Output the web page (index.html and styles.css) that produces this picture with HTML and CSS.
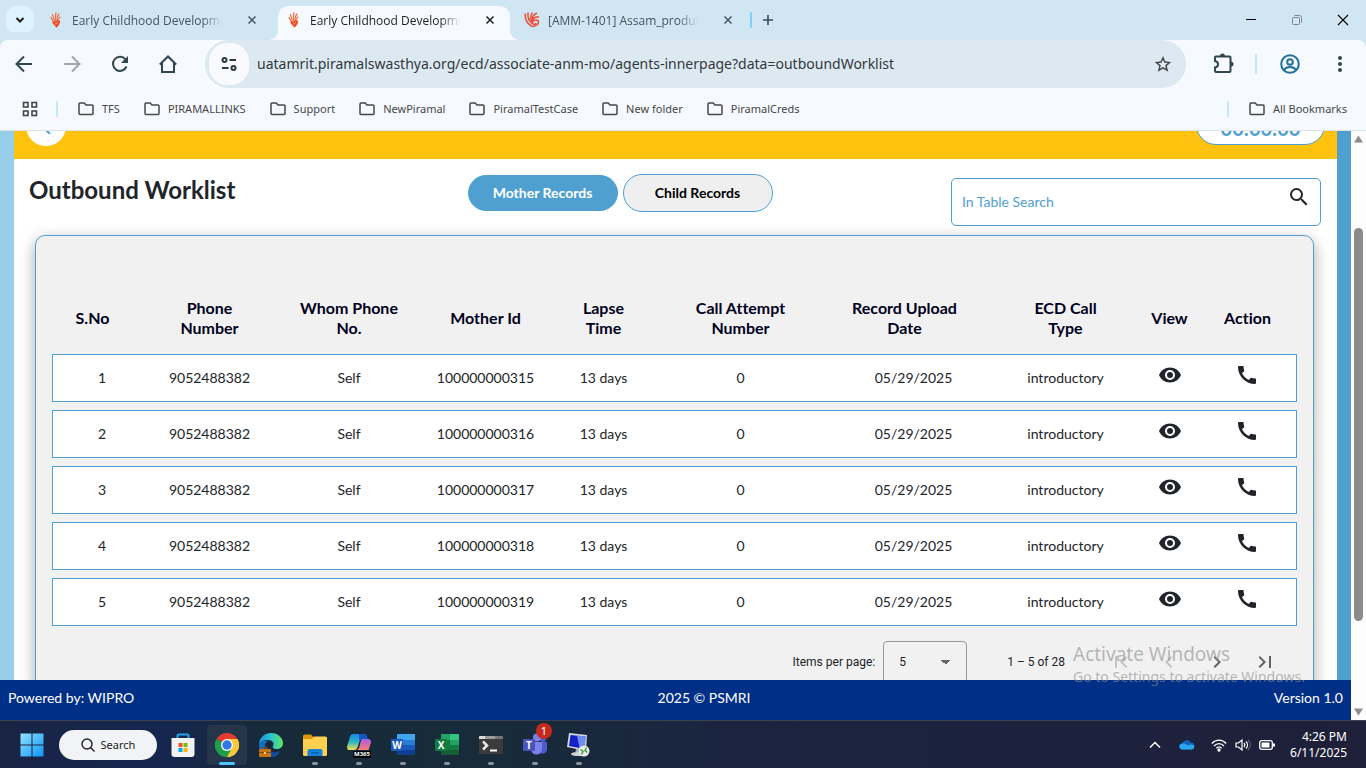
FILE: index.html
```html
<!DOCTYPE html>
<html lang="en">
<head>
  <meta charset="UTF-8" />
  <meta name="viewport" content="width=device-width, initial-scale=1.0" />
  <title>Early Childhood Development</title>
  <link rel="stylesheet" href="styles.css">
</head>
<body>

<!-- shared icons -->
<svg class="sprite" aria-hidden="true">
  <symbol id="hand" viewBox="0 0 16 16">
    <g fill="none" stroke-linecap="round" stroke="#f4683c" stroke-width="1.200">
      <path d="M3 5.500c.8 1.500 1.800 3 3.200 5"/>
      <path d="M4.500 2.500c.4 2.500 1.200 4.500 2.500 6.500"/>
      <path d="M8 .8c-.8 2.500-.7 5-.2 7.500"/>
      <path d="M11 2C9.500 3.500 8.800 5.500 9 8"/>
      <path d="M12 5c-1.200.8-2 2-2.300 3.500"/>
    </g>
    <path d="M4 9.500c3 .8 5-2 7.800-1 .9 2-.5 4.500-3.300 7.300C7.200 13.500 5 12.800 4 9.500z" fill="#ee4a24"/>
    <path d="M7 12c1.500 0 2.500-1 2.500-2" fill="none" stroke="#fbc1a8" stroke-width=".8"/>
  </symbol>
  <symbol id="swirl" viewBox="0 0 16 16">
    <g fill="none" stroke="#ef4a30" stroke-width="1.500" stroke-linecap="round">
      <path d="M1.200 2c-.3 5 2 9.500 6 12"/>
      <path d="M4 1c-.5 4 .8 7.500 3.500 10"/>
      <path d="M8 1C6.300 4 6.300 6.500 7.800 9"/>
      <path d="M12.500 1.200C9.500 2.500 8.500 4.500 8.500 7"/>
      <path d="M14.500 5c-3-.5-5 .8-5.700 3.500"/>
      <path d="M14 8.500c-2.500-1.200-5.500 0-5.500 2.500 0 1.500 2.500 2 3.500.5M14 8.500c1.500 3-1 6-5.500 6"/>
    </g>
  </symbol>
  <symbol id="close" viewBox="0 0 10 10">
    <path d="M1.500 1.500l7 7M8.500 1.500l-7 7" stroke="currentColor" stroke-width="1.500"/>
  </symbol>
  <symbol id="folder" viewBox="0 0 16 14">
    <path d="M1 2.200c0-.7.400-1.200 1-1.200h4.200l1.800 2h6c.6 0 1 .5 1 1v7.500c0 .6-.4 1-1 1H2c-.6 0-1-.4-1-1z" fill="none" stroke="#474747" stroke-width="1.500"/>
  </symbol>
  <symbol id="search" viewBox="0 0 24 24">
    <path d="M15.500 14h-.79l-.28-.27A6.470 6.470 0 0 0 16 9.500 6.500 6.500 0 1 0 9.500 16c1.610 0 3.090-.59 4.230-1.570l.27.28v.79l5 4.990L20.490 19l-4.990-5zm-6 0C7.010 14 5 11.990 5 9.500S7.010 5 9.500 5 14 7.010 14 9.500 11.990 14 9.500 14z" fill="currentColor"/>
  </symbol>
  <symbol id="eye" viewBox="0 0 24 24">
    <path d="M12 4.500C7 4.500 2.730 7.610 1 12c1.730 4.390 6 7.500 11 7.500s9.270-3.110 11-7.500c-1.730-4.390-6-7.500-11-7.500zM12 17a5 5 0 1 1 0-10 5 5 0 0 1 0 10zm0-8a3 3 0 1 0 0 6 3 3 0 0 0 0-6z" fill="currentColor"/>
  </symbol>
  <symbol id="phone" viewBox="0 0 24 24">
    <path d="M20.010 15.380c-1.230 0-2.420-.2-3.530-.56a.98.98 0 0 0-1.010.24l-1.570 1.970c-2.830-1.350-5.480-3.900-6.890-6.830l1.950-1.660c.27-.28.350-.67.240-1.020-.37-1.110-.56-2.300-.56-3.530 0-.54-.45-.99-.99-.99H4.190C3.650 3 3 3.240 3 3.990 3 13.280 10.730 21 20.010 21c.71 0 .99-.63.990-1.180v-3.450c0-.54-.45-.99-.99-.99z" fill="currentColor"/>
  </symbol>
</svg>

<!-- tab strip -->
<div class="tabstrip">
  <button class="tab-search" aria-label="Search tabs">
    <svg width="10" height="6" viewBox="0 0 10 6"><path d="M1.500 1L5 4.500 8.500 1" fill="none" stroke="#1f1f1f" stroke-width="2"/></svg>
  </button>
  <div class="tab">
    <svg class="favicon"><use href="#hand"/></svg>
    <span class="tab-title">Early Childhood Development</span>
    <button class="tab-close" aria-label="Close tab"><svg width="10" height="10"><use href="#close"/></svg></button>
  </div>
  <div class="tab active">
    <svg class="favicon"><use href="#hand"/></svg>
    <span class="tab-title">Early Childhood Development</span>
    <button class="tab-close" aria-label="Close tab"><svg width="10" height="10"><use href="#close"/></svg></button>
  </div>
  <div class="tab">
    <svg class="favicon"><use href="#swirl"/></svg>
    <span class="tab-title">[AMM-1401] Assam_production</span>
    <button class="tab-close" aria-label="Close tab"><svg width="10" height="10"><use href="#close"/></svg></button>
  </div>
  <span class="divider"></span>
  <button class="new-tab" aria-label="New tab">
    <svg width="12" height="12" viewBox="0 0 12 12"><path d="M6 1v10M1 6h10" stroke="#3c4a52" stroke-width="1.600"/></svg>
  </button>
  <div class="window-buttons">
    <button aria-label="Minimize"><svg width="12" height="12" viewBox="0 0 12 12"><path d="M1 5.500h10" stroke="#000"/></svg></button>
    <button aria-label="Restore"><svg width="12" height="12" viewBox="0 0 12 12" fill="none" stroke="#7b858b"><rect x="1.500" y="3.500" width="7" height="7" rx="1"/><path d="M3.500 1.500h5a2 2 0 0 1 2 2v5"/></svg></button>
    <button aria-label="Close"><svg width="12" height="12" viewBox="0 0 12 12"><path d="M1 1l10 10M11 1L1 11" stroke="#000" stroke-width="1.100"/></svg></button>
  </div>
</div>

<!-- toolbar -->
<div class="toolbar">
  <button class="tool" aria-label="Back"><svg width="18" height="18" viewBox="0 0 18 18" fill="none" stroke="#33454f" stroke-width="2"><path d="M17 9H2M9 1.500L1.500 9 9 16.500"/></svg></button>
  <button class="tool" aria-label="Forward"><svg width="18" height="18" viewBox="0 0 18 18" fill="none" stroke="#a3a7ab" stroke-width="2"><path d="M1 9h15M9 1.500L16.500 9 9 16.500"/></svg></button>
  <button class="tool" aria-label="Reload"><svg width="18" height="18" viewBox="0 0 18 18"><path d="M15.500 11.500A7 7 0 1 1 14.500 4.500" fill="none" stroke="#33454f" stroke-width="2"/><path d="M17 1v7h-7z" fill="#33454f"/></svg></button>
  <button class="tool" aria-label="Home"><svg width="18" height="18" viewBox="0 0 18 18"><path d="M.8 9.500L9 1.500l8.200 8M3 7.500V17h12V7.500" fill="none" stroke="#33454f" stroke-width="2"/></svg></button>
  <div class="omnibox">
    <button class="site-info" aria-label="View site information">
      <svg width="16" height="16" viewBox="0 0 16 16" fill="none" stroke="#2d3a42" stroke-width="2"><circle cx="3.500" cy="4" r="2"/><path d="M8.500 4H15M1 12h6.500"/><circle cx="12.500" cy="12" r="2"/></svg>
    </button>
    <input class="url" type="text" aria-label="Address and search bar" value="uatamrit.piramalswasthya.org/ecd/associate-anm-mo/agents-innerpage?data=outboundWorklist">
    <button class="star" aria-label="Bookmark this tab">
      <svg width="16" height="16" viewBox="0 0 16 16"><path d="M8 1.800l1.900 4.300 4.600.4L11 9.600l1.100 4.600L8 11.800l-4.100 2.400L5 9.600 1.500 6.500l4.600-.4z" fill="none" stroke="#474747" stroke-width="1.500"/></svg>
    </button>
  </div>
  <button class="tool ext" aria-label="Extensions"><svg width="22" height="22" viewBox="0 0 22 22"><path d="M3 3.500h13.500a1 1 0 0 1 1 1V18a1 1 0 0 1-1 1H3a1 1 0 0 1-1-1v-3.500c4-.5 4-6 0-6.500V4.500a1 1 0 0 1 1-1z" fill="none" stroke="#33454f" stroke-width="2"/><path d="M7 3a2.500 2.500 0 0 1 5 0zM18 8.500a2.500 2.500 0 0 1 0 5z" fill="#33454f"/></svg></button>
  <span class="divider"></span>
  <button class="tool profile" aria-label="Profile"><svg width="20" height="20" viewBox="0 0 20 20" fill="none" stroke="#22719d" stroke-width="2"><circle cx="10" cy="10" r="8.800"/><circle cx="10" cy="8" r="2.800"/><path d="M3.800 16c3-4 9.400-4 12.400 0"/></svg></button>
  <button class="tool menu" aria-label="Menu"><svg width="4" height="16" viewBox="0 0 4 16" fill="#33454f"><circle cx="2" cy="2" r="2"/><circle cx="2" cy="8" r="2"/><circle cx="2" cy="14" r="2"/></svg></button>
</div>

<!-- bookmarks -->
<nav class="bookmarks">
  <button class="apps" aria-label="Apps">
    <svg width="16" height="16" viewBox="0 0 16 16" fill="none" stroke="#474747" stroke-width="1.600"><rect x="1.500" y="1.500" width="4.500" height="4.500"/><rect x="10" y="1.500" width="4.500" height="4.500"/><rect x="1.500" y="10" width="4.500" height="4.500"/><rect x="10" y="10" width="4.500" height="4.500"/></svg>
  </button>
  <span class="divider"></span>
  <a href="#"><svg><use href="#folder"/></svg>TFS</a>
  <a href="#"><svg><use href="#folder"/></svg>PIRAMALLINKS</a>
  <a href="#"><svg><use href="#folder"/></svg>Support</a>
  <a href="#"><svg><use href="#folder"/></svg>NewPiramal</a>
  <a href="#"><svg><use href="#folder"/></svg>PiramalTestCase</a>
  <a href="#"><svg><use href="#folder"/></svg>New folder</a>
  <a href="#"><svg><use href="#folder"/></svg>PiramalCreds</a>
  <span class="divider push"></span>
  <a class="all" href="#"><svg><use href="#folder"/></svg>All Bookmarks</a>
</nav>

<div class="viewport">
  <div class="page">
    <main class="content">
      <header class="topbar">
        <button class="back" aria-label="Back"><svg width="16" height="16" viewBox="0 0 16 16"><path d="M12 2L5 9l7 7" fill="none" stroke="#4fa0d0" stroke-width="2"/></svg></button>
        <span class="timer">00:00:00</span>
      </header>

      <div class="heading">
        <h1>Outbound Worklist</h1>
        <div class="record-tabs">
          <button class="pill selected">Mother Records</button>
          <button class="pill">Child Records</button>
        </div>
        <label class="table-search">
          <input type="text" placeholder="In Table Search" aria-label="In Table Search">
          <svg><use href="#search"/></svg>
        </label>
      </div>

      <section class="card">
        <table class="worklist">
          <colgroup>
            <col class="c-sno"><col class="c-phone"><col class="c-whom"><col class="c-mother"><col class="c-lapse">
            <col class="c-attempt"><col class="c-date"><col class="c-type"><col class="c-view"><col class="c-action">
          </colgroup>
          <thead>
            <tr>
              <th class="sortable">S.No</th>
              <th>Phone<br>Number</th>
              <th>Whom Phone<br>No.</th>
              <th>Mother Id</th>
              <th>Lapse<br>Time</th>
              <th>Call Attempt<br>Number</th>
              <th class="sortable">Record Upload<br>Date</th>
              <th>ECD Call<br>Type</th>
              <th>View</th>
              <th>Action</th>
            </tr>
          </thead>
          <tbody>
            <tr>
              <td>1</td><td>9052488382</td><td>Self</td><td>100000000315</td><td>13 days</td><td>0</td><td>05/29/2025</td><td>introductory</td>
              <td><button class="icon-btn" aria-label="View"><svg><use href="#eye"/></svg></button></td>
              <td><button class="icon-btn" aria-label="Call"><svg><use href="#phone"/></svg></button></td>
            </tr>
            <tr>
              <td>2</td><td>9052488382</td><td>Self</td><td>100000000316</td><td>13 days</td><td>0</td><td>05/29/2025</td><td>introductory</td>
              <td><button class="icon-btn" aria-label="View"><svg><use href="#eye"/></svg></button></td>
              <td><button class="icon-btn" aria-label="Call"><svg><use href="#phone"/></svg></button></td>
            </tr>
            <tr>
              <td>3</td><td>9052488382</td><td>Self</td><td>100000000317</td><td>13 days</td><td>0</td><td>05/29/2025</td><td>introductory</td>
              <td><button class="icon-btn" aria-label="View"><svg><use href="#eye"/></svg></button></td>
              <td><button class="icon-btn" aria-label="Call"><svg><use href="#phone"/></svg></button></td>
            </tr>
            <tr>
              <td>4</td><td>9052488382</td><td>Self</td><td>100000000318</td><td>13 days</td><td>0</td><td>05/29/2025</td><td>introductory</td>
              <td><button class="icon-btn" aria-label="View"><svg><use href="#eye"/></svg></button></td>
              <td><button class="icon-btn" aria-label="Call"><svg><use href="#phone"/></svg></button></td>
            </tr>
            <tr>
              <td>5</td><td>9052488382</td><td>Self</td><td>100000000319</td><td>13 days</td><td>0</td><td>05/29/2025</td><td>introductory</td>
              <td><button class="icon-btn" aria-label="View"><svg><use href="#eye"/></svg></button></td>
              <td><button class="icon-btn" aria-label="Call"><svg><use href="#phone"/></svg></button></td>
            </tr>
          </tbody>
        </table>

        <div class="paginator">
          <label for="page-size">Items per page:</label>
          <select id="page-size">
            <option>5</option>
            <option>10</option>
            <option>20</option>
          </select>
          <span class="range">1 – 5 of 28</span>
          <button disabled aria-label="First page"><svg viewBox="0 0 24 24"><path d="M18.410 16.590L13.820 12l4.590-4.590L17 6l-6 6 6 6zM6 6h2v12H6z"/></svg></button>
          <button disabled aria-label="Previous page"><svg viewBox="0 0 24 24"><path d="M15.410 7.410L14 6l-6 6 6 6 1.410-1.410L10.830 12z"/></svg></button>
          <button aria-label="Next page"><svg viewBox="0 0 24 24"><path d="M10 6L8.590 7.410 13.170 12l-4.580 4.590L10 18l6-6z"/></svg></button>
          <button aria-label="Last page"><svg viewBox="0 0 24 24"><path d="M5.590 7.410L10.180 12l-4.590 4.590L7 18l6-6-6-6zM16 6h2v12h-2z"/></svg></button>
        </div>
      </section>
    </main>

    <footer class="footer">
      <span>Powered by: WIPRO</span>
      <span>2025 © PSMRI</span>
      <span>Version 1.0</span>
    </footer>
  </div>

  <div class="scrollbar">
    <svg width="9" height="8" viewBox="0 0 9 8"><path d="M4.500 .5L9 7.500H0z" fill="#8b8b8b"/></svg>
    <div class="track"><div class="thumb"></div></div>
    <svg width="9" height="8" viewBox="0 0 9 8"><path d="M4.500 7.500L9 .5H0z" fill="#8b8b8b"/></svg>
  </div>

  <div class="watermark">
    <div class="wm-title">Activate Windows</div>
    <div class="wm-text">Go to Settings to activate Windows.</div>
  </div>
</div>

<!-- taskbar -->
<div class="taskbar">
  <button class="task" aria-label="Start">
    <svg viewBox="0 0 24 24"><defs><linearGradient id="win" x1="0" y1="0" x2="1" y2="1"><stop offset="0" stop-color="#8fe3ff"/><stop offset="1" stop-color="#0f93f5"/></linearGradient></defs><path d="M.5.500h11v11H.5zM12.500.500h11v11h-11zM.5 12.500h11v11H.5zM12.500 12.500h11v11h-11z" fill="url(#win)"/></svg>
  </button>
  <button class="task-search"><svg width="14" height="14" viewBox="0 0 14 14"><circle cx="6" cy="6" r="5" fill="none" stroke="#222" stroke-width="1.400"/><path d="M9.500 9.500L13.500 13.500" stroke="#222" stroke-width="1.400"/></svg>Search</button>
  <button class="task" aria-label="Microsoft Store">
    <svg viewBox="0 0 24 24"><path d="M6.500 6V2.500a1 1 0 0 1 1-1h9a1 1 0 0 1 1 1V6" fill="none" stroke="#27a5e8" stroke-width="2"/><path d="M.5 5h23v16a3 3 0 0 1-3 3h-17a3 3 0 0 1-3-3z" fill="#f1f2f4"/><path d="M7.500 10h4v4h-4z" fill="#f25022"/><path d="M12.500 10h4v4h-4z" fill="#7fba00"/><path d="M7.500 15h4v4h-4z" fill="#00a4ef"/><path d="M12.500 15h4v4h-4z" fill="#ffb900"/></svg>
  </button>
  <button class="task open current" aria-label="Google Chrome">
    <svg viewBox="0 0 24 24"><path d="M12 12L1.600 6A12 12 0 0 1 22.400 6z" fill="#e33b2e"/><path d="M12 12L22.400 6A12 12 0 0 1 12 24z" fill="#fcc934"/><path d="M12 12v12A12 12 0 0 1 1.600 6z" fill="#1e9e4a"/><path d="M12 6h10.400A12 12 0 0 1 12 24l5.200-9z" fill="#fcc934"/><path d="M1.600 6l5.200 9 5.200 3 5-3-5 9A12 12 0 0 1 1.600 6z" fill="#1e9e4a"/><circle cx="12" cy="12" r="6" fill="#fff"/><circle cx="12" cy="12" r="4.700" fill="#2f78e6"/></svg>
  </button>
  <button class="task" aria-label="Microsoft Edge">
    <svg viewBox="0 0 24 24"><defs><linearGradient id="edge" x1="0" y1="0" x2="1" y2="0"><stop offset="0" stop-color="#1793dd"/><stop offset=".5" stop-color="#2bc3d2"/><stop offset="1" stop-color="#62e35c"/></linearGradient></defs><path d="M0 12C0 5 5 0 12 0s12 5 12 10c0 4-3 6-6 6-4 0-5-1.500-4-3 2-3-1-6-5-6-4.500 0-8 2-9 5z" fill="url(#edge)"/><path d="M0 12c1.500-4 6-5.500 10-4-4 1-5 5-4 8 1.500 5 8 7 14 4-3 4-8 5-12 3.500C3 22 0 17 0 12z" fill="#1270be"/><path d="M6.500 12c1 6 7 9 14.500 6-2 4-6 6-10 6C5 22 4 15 6.500 12z" fill="#0f4b9e"/><rect x="0" y="16" width="12" height="8" rx="1" fill="#c87416"/><path d="M4 16v-1.500h4V16M0 19.500h12" fill="none" stroke="#8b4a09"/><path d="M5 19h2v2H5z" fill="#ffd263"/></svg>
  </button>
  <button class="task open" aria-label="File Explorer">
    <svg viewBox="0 0 24 24"><path d="M0 3a1.500 1.500 0 0 1 1.500-1.500H8L10.500 4H23v7H0z" fill="#dc9608"/><path d="M0 6h9l2-2.500h11.500A1.500 1.500 0 0 1 24 5v16.500A1.500 1.500 0 0 1 22.500 23h-21A1.500 1.500 0 0 1 0 21.500z" fill="#ffd04f"/><path d="M4.500 23v-5a2 2 0 0 1 2-2h11a2 2 0 0 1 2 2v5z" fill="#1583d8"/><path d="M8 19h8v1.500H8z" fill="#0b62ad"/></svg>
  </button>
  <button class="task open" aria-label="Microsoft 365">
    <svg viewBox="0 0 24 24"><defs><linearGradient id="cop1" x1="0" y1="0" x2="0" y2="1"><stop offset="0" stop-color="#1a86e8"/><stop offset=".5" stop-color="#28b7c4"/><stop offset="1" stop-color="#f4e04a"/></linearGradient><linearGradient id="cop2" x1="0" y1="0" x2="0" y2="1"><stop offset="0" stop-color="#a45fe8"/><stop offset="1" stop-color="#ff7a72"/></linearGradient></defs><path d="M6 1h11c2 0 3 2 3.500 5H15c-2 0-2.500 2-3.500 5.500S9.500 17 7 17H3c-3 0-3.500-2-2.500-5L3 4c.5-2 1.500-3 3-3z" fill="url(#cop1)"/><path d="M12 1h5c2 0 3 2 3.500 5H15c-2 0-2.500 1-3 2z" fill="#1557c4"/><path d="M15 6h6c3 0 3.500 2 2.500 5l-2 6H10c2-1 2.500-3 3.200-6.500C13.700 8 14 7 15 6z" fill="url(#cop2)"/></svg>
    <span class="m365">M365</span>
  </button>
  <button class="task open" aria-label="Word">
    <svg viewBox="0 0 24 24"><path d="M6 1h18v6H6z" fill="#41a5ee"/><path d="M6 7h18v5H6z" fill="#2b7cd3"/><path d="M6 12h18v5H6z" fill="#185abd"/><path d="M6 17h18v5H6z" fill="#103f91"/><rect y="6" width="12" height="12" rx="1" fill="#185abd"/><text x="6" y="16" class="letter">W</text></svg>
  </button>
  <button class="task open" aria-label="Excel">
    <svg viewBox="0 0 24 24"><path d="M6 1h9v6H6z" fill="#21a366"/><path d="M15 1h9v6h-9z" fill="#33c481"/><path d="M6 7h9v10H6z" fill="#107c41"/><path d="M15 7h9v5h-9z" fill="#21a366"/><path d="M15 12h9v5h-9z" fill="#107c41"/><path d="M6 17h18v5H6z" fill="#185c37"/><rect y="6" width="12" height="12" rx="1" fill="#107c41"/><text x="6" y="16" class="letter">X</text></svg>
  </button>
  <button class="task open" aria-label="Terminal">
    <svg viewBox="0 0 24 24"><path d="M0 4a1 1 0 0 1 1-1h22a1 1 0 0 1 1 1v16a1 1 0 0 1-1 1H1a1 1 0 0 1-1-1z" fill="#3b3b3b"/><path d="M0 6V4a1 1 0 0 1 1-1h5v3z" fill="#dadada"/><path d="M6 3h10v3H6z" fill="#9b9b9b"/><path d="M16 3h7a1 1 0 0 1 1 1v2h-8z" fill="#777"/><path d="M4 8.500l4 4-4 4" fill="none" stroke="#e6e6e6" stroke-width="2.500"/><path d="M11 16.500h7v2h-7z" fill="#fff"/></svg>
  </button>
  <button class="task open" aria-label="Teams, 1 notification">
    <svg viewBox="0 0 24 24"><circle cx="20" cy="6" r="3" fill="#5059c9"/><path d="M16 9h8v7a4.500 4.500 0 0 1-8 3z" fill="#5059c9"/><circle cx="14" cy="4.500" r="4" fill="#7b83eb"/><path d="M8 9h11v7a5.500 5.500 0 0 1-11 0z" fill="#7b83eb"/><rect y="6" width="12" height="12" rx="1" fill="#4b53bc"/><text x="6" y="16" class="letter">T</text></svg>
    <span class="badge">1</span>
  </button>
  <button class="task open" aria-label="Remote Desktop">
    <svg viewBox="0 0 24 24"><path d="M9 16l6 1v4H8z" fill="#a8afb8"/><ellipse cx="11" cy="21" rx="7" ry="2" fill="#cfd3d8"/><path d="M2 0l18 2-1 16L0 14z" fill="#d4d9de"/><path d="M3.500 2l15 1.500-1 12.500-15.500-3z" fill="#1520c8"/><path d="M10 2.600l8.500.9-1 12.500-5-1z" fill="#6f8cf0"/><circle cx="17" cy="18" r="5.500" fill="#eceeea"/><path d="M13.500 16.500l2.500 2-1.500 3M20.500 19.500l-2.500-2 1.500-3" fill="none" stroke="#3b9a3a" stroke-width="1.500"/></svg>
  </button>

  <div class="tray">
    <button aria-label="Show hidden icons"><svg width="12" height="8" viewBox="0 0 12 8"><path d="M1 6.500l5-5 5 5" fill="none" stroke="#fff" stroke-width="1.500"/></svg></button>
    <button class="cloud" aria-label="OneDrive"><svg width="16" height="11" viewBox="0 0 16 11"><path d="M3 10.500A3 3 0 0 1 3 4.500 5 5 0 0 1 12 3.500a3.600 3.600 0 0 1 1 7z" fill="#0d64b8"/><path d="M3 10.500a3 3 0 0 1-1-5.500c3-1 5 0 7 1.500 2-1.500 4.500-1 6 0a3 3 0 0 1-2 4z" fill="#28a8ea"/></svg></button>
    <button class="status" aria-label="Network, volume and battery">
      <svg width="16" height="14" viewBox="0 0 16 14" fill="none" stroke="#fff" stroke-width="1.300"><path d="M.8 5.500c4-4.500 10.400-4.500 14.400 0M3 8c3-3.300 7-3.300 10 0M5.300 10.300c1.700-1.800 3.700-1.800 5.400 0"/><circle cx="8" cy="12" r="1" fill="#fff"/></svg>
      <svg width="16" height="14" viewBox="0 0 16 14" fill="none" stroke="#fff" stroke-width="1.200"><path d="M1 5h2.500L7 2v10L3.500 9H1z"/><path d="M9 5c1 1.200 1 2.800 0 4M11 3.500c2 2 2 5 0 7"/><path d="M13 2c3 3 3 7 0 10" stroke="#5e5e72"/></svg>
      <svg width="16" height="14" viewBox="0 0 16 14"><rect x=".7" y="2.700" width="12.600" height="8.600" rx="2" fill="none" stroke="#fff" stroke-width="1.300"/><path d="M2.500 4.500h8v5h-8zM14 5.500h2v3h-2z" fill="#fff"/></svg>
    </button>
    <div class="clock"><div>4:26 PM</div><div>6/11/2025</div></div>
  </div>
</div>

</body>
</html>
```
FILE: styles.css
```css
*{box-sizing:border-box}
body{
  margin:0;
  height:100vh;
  display:flex;
  flex-direction:column;
  overflow:hidden;
  font-family:'Noto Sans',sans-serif;
  font-size:11px;
  color:#212529;
  background:#fff;
}
button{
  display:flex;
  align-items:center;
  justify-content:center;
  padding:0;
  border:none;
  background:none;
  font-family:inherit;
  color:inherit;
}
svg{flex-shrink:0}
.sprite{display:none}
.divider{width:2px;height:16px;background:#c2e7ff;border-radius:1px}

/* tab strip */
.tabstrip{
  display:flex;
  align-items:center;
  height:40px;
  flex-shrink:0;
  padding-left:6px;
  gap:6px;
  background:#d1e6f3;
}
.tab-search{width:28px;height:28px;border-radius:10px;background:#dff2ff}
.tab{
  position:relative;
  display:flex;
  align-items:center;
  align-self:flex-end;
  width:232px;
  height:34px;
  padding:0 12px 6px 8px;
  color:#45555f;
}
.favicon{width:16px;height:16px;margin-right:8px}
.tab-title{
  width:150px;
  font-size:12px;
  font-family:'Open Sans',sans-serif;
  white-space:nowrap;
  overflow:hidden;
  -webkit-mask-image:linear-gradient(90deg,#000 130px,transparent);
  mask-image:linear-gradient(90deg,#000 130px,transparent);
}
.tab-close{width:16px;height:16px;margin-left:auto}
.tab.active{background:#f6f9fe;border-radius:10px 10px 0 0;color:#1f1f1f}
.tab.active::before,.tab.active::after{
  content:"";
  position:absolute;
  bottom:0;
  width:10px;
  height:10px;
}
.tab.active::before{left:-10px;background:radial-gradient(circle at 0 0,transparent 10px,#f6f9fe 10px)}
.tab.active::after{right:-10px;background:radial-gradient(circle at 100% 0,transparent 10px,#f6f9fe 10px)}
.tabstrip .divider{background:#7fcfff;margin:0 4px 0 -4px}
.new-tab{width:12px;height:28px}
.window-buttons{display:flex;margin-left:auto}
.window-buttons button{width:46px;height:40px}

/* toolbar */
.toolbar{
  display:flex;
  align-items:center;
  height:48px;
  flex-shrink:0;
  background:#f6f9fe;
  border-radius:8px 8px 0 0;
  box-shadow:0 -8px 0 #d1e6f3;
}
.tool{width:48px;height:40px}
.omnibox{
  display:flex;
  align-items:center;
  flex:1;
  height:48px;
  margin-left:13px;
  padding:0 13px 0 4px;
  border-radius:24px;
  background:#dde9f0;
}
.site-info{width:40px;height:42px;border-radius:18px;background:#f8fafe}
.url{
  flex:1;
  min-width:0;
  padding:0 8px 2px;
  border:none;
  background:none;
  outline:none;
  font-family:inherit;
  font-size:14px;
  color:#33383c;
}
.star{width:20px;height:20px}
.ext{width:69px;padding-left:6px}
.toolbar .divider{height:20px}
.profile{width:66px}
.menu{width:34px;margin-right:9px}

/* bookmarks */
.bookmarks{
  display:flex;
  align-items:center;
  height:43px;
  flex-shrink:0;
  padding:0 19px 0 22px;
  border-bottom:1px solid #dbe2ea;
  background:#f6f9fe;
}
.apps{width:16px;height:16px;margin-right:18px}
.bookmarks .divider{margin-right:20px}
.bookmarks .push{margin-left:auto}
.bookmarks a{
  display:flex;
  align-items:center;
  gap:8px;
  margin-right:24px;
  color:#474747;
  line-height:16px;
  text-decoration:none;
}
.bookmarks .all{margin-right:0}
.bookmarks svg{width:16px;height:14px}
.bookmarks .apps svg{height:16px}

/* page */
.viewport{position:relative;display:flex;flex:1;min-height:0}
.page{
  display:flex;
  flex-direction:column;
  flex:1;
  min-width:0;
  font-family:Lato,sans-serif;
  font-variant-ligatures:none;
}
.content{
  flex:1;
  min-height:0;
  overflow:hidden;
  border-left:14px solid #97cfea;
  border-right:14px solid #4fa0d0;
}
/* the page is scrolled, only the lower part of the bar shows */
.topbar{
  display:flex;
  align-items:flex-end;
  justify-content:space-between;
  height:56px;
  margin-top:-28px;
  padding:0 12px 13px;
  background:#ffc20e;
}
.back{width:40px;height:40px;border-radius:50%;background:#fff}
.timer{
  width:129px;
  height:40px;
  margin-bottom:1px;
  border:1px solid #4fa0d0;
  border-radius:20px;
  background:#fff;
  color:#4fa0d0;
  font-size:20px;
  font-weight:700;
  line-height:44px;
  text-align:center;
}
.heading{
  display:grid;
  grid-template-columns:1fr auto 1fr;
  align-items:start;
  height:76px;
  padding:15px 16px 0 15px;
}
h1{margin:0;font-size:24px;font-weight:700;line-height:32px}
.record-tabs{display:flex;align-items:center;gap:5px;margin-right:110px}
.pill{
  width:150px;
  height:38px;
  padding-bottom:2px;
  border:1px solid #4fa0d0;
  border-radius:19px;
  background:#efefef;
  color:#000;
  font-size:14px;
  font-weight:700;
}
.pill.selected{height:36px;background:#4fa0d0;color:#fff}
.table-search{
  display:flex;
  align-items:center;
  justify-self:end;
  width:370px;
  height:48px;
  margin-top:4px;
  padding:0 9px 0 10px;
  border:1px solid #4fa0d0;
  border-radius:5px;
}
.table-search input{
  flex:1;
  min-width:0;
  padding:0 0 2px;
  border:none;
  outline:none;
  background:none;
  font-family:inherit;
  font-size:14px;
}
.table-search input::placeholder{color:#4fa0d0}
.table-search svg{width:24px;height:24px;margin-bottom:10px}

.card{
  margin:0 23px 0 21px;
  padding:46px 16px 0;
  border:1px solid #4fa0d0;
  border-radius:10px;
  background:#f1f1f1;
  box-shadow:0 5px 15px rgba(0,0,0,.35);
}
.worklist{
  width:100%;
  table-layout:fixed;
  border-collapse:separate;
  border-spacing:0 8px;
  font-size:14px;
  text-align:center;
}
.c-sno{width:77px}
.c-phone{width:161px}
.c-whom{width:118px}
.c-mother{width:155px}
.c-lapse{width:81px}
.c-attempt{width:193px}
.c-date{width:153px}
.c-type{width:151px}
.c-view{width:57px}
.c-action{width:99px}
.worklist th{
  height:56px;
  padding:0;
  color:#000020;
  font-size:16px;
  font-weight:700;
  line-height:20px;
}
.worklist th.sortable{padding-right:18px}
.worklist td{
  height:48px;
  padding:0 0 2px;
  border:solid #4fa0d0;
  border-width:1px 0;
  background:#fff;
}
.worklist th:first-child,.worklist td:first-child{padding-left:22px}
.worklist td:first-child{border-left-width:1px}
.worklist td:last-child{border-right-width:1px}
.icon-btn{margin:0 auto 4px}
.icon-btn svg{width:24px;height:24px}

.paginator{
  display:flex;
  align-items:center;
  justify-content:flex-end;
  height:56px;
  padding-right:8px;
  font-family:Roboto,sans-serif;
  font-size:12px;
}
.paginator select{
  width:84px;
  height:42px;
  margin:0 4px 0 8px;
  padding:0 15px;
  appearance:none;
  border:1px solid #999;
  border-radius:4px;
  background:
    linear-gradient(to top right,transparent 50%,#666 50%) 57px 18px/5px 5px no-repeat,
    linear-gradient(to top left,transparent 50%,#666 50%) 62px 18px/5px 5px no-repeat;
  font-family:inherit;
  font-size:12px;
  color:#212529;
}
.range{margin:0 32px 0 36px}
.paginator button{width:48px;height:48px;color:#646464}
.paginator button:disabled{color:#c4c4c4}
.paginator button svg{width:24px;height:24px;fill:currentColor}

.footer{
  display:flex;
  align-items:center;
  justify-content:space-between;
  height:40px;
  padding:0 8px 5px;
  background:#002f87;
  color:#fff;
  font-size:14px;
  z-index:1;
}

.scrollbar{
  display:flex;
  flex-direction:column;
  align-items:center;
  width:15px;
  padding:4px 0;
  background:#fcfcfc;
}
.track{flex:1;padding:85px 0 87px}
.thumb{width:9px;height:100%;border-radius:5px;background:#8b8b8b}

.watermark{
  position:absolute;
  right:57px;
  bottom:33px;
  z-index:2;
  width:236px;
  color:rgba(140,140,140,.6);
  white-space:nowrap;
  pointer-events:none;
}
.wm-title{font-size:19px;line-height:26px}
.wm-text{font-size:14px;line-height:20px}

/* taskbar */
.taskbar{
  display:flex;
  align-items:center;
  height:48px;
  flex-shrink:0;
  padding:0 19px 0 12px;
  gap:4px;
  border-top:1px solid #3c4250;
  background:linear-gradient(90deg,#192444 0,#15264f 160px,#172a3a 260px,#182b3a 500px,#1a2440 720px,#1f2039 1366px);
  color:#fff;
}
.task{position:relative;width:40px;height:40px;border-radius:4px}
.task svg{width:24px;height:24px}
.task.current{background:#26364a}
.task.open::after{
  content:"";
  position:absolute;
  bottom:0;
  left:17px;
  width:6px;
  height:3px;
  border-radius:2px;
  background:#8c929d;
}
.task.current::after{left:12px;width:16px;background:#4cc2ff}
.task-search{
  gap:6px;
  width:98px;
  height:30px;
  margin:0 2px 0 3px;
  border-radius:15px;
  background:#f2f3f6;
  color:#222;
  font-size:11px;
}
.letter{fill:#fff;font-family:'Open Sans',sans-serif;font-size:10px;font-weight:700;text-anchor:middle}
.m365{
  position:absolute;
  right:8px;
  bottom:7px;
  padding:0 1px;
  background:#000;
  font-size:6px;
  font-weight:700;
  line-height:7px;
}
.badge{
  position:absolute;
  top:-2px;
  right:3px;
  width:16px;
  height:16px;
  border-radius:50%;
  background:#c42b1c;
  font-size:11px;
  line-height:16px;
}
.tray{display:flex;align-items:center;margin-left:auto}
.cloud{margin-left:18px}
.status{gap:8px;margin:0 0 0 16px}
.clock{width:72px;text-align:right;line-height:16px;font-size:12px}
```
